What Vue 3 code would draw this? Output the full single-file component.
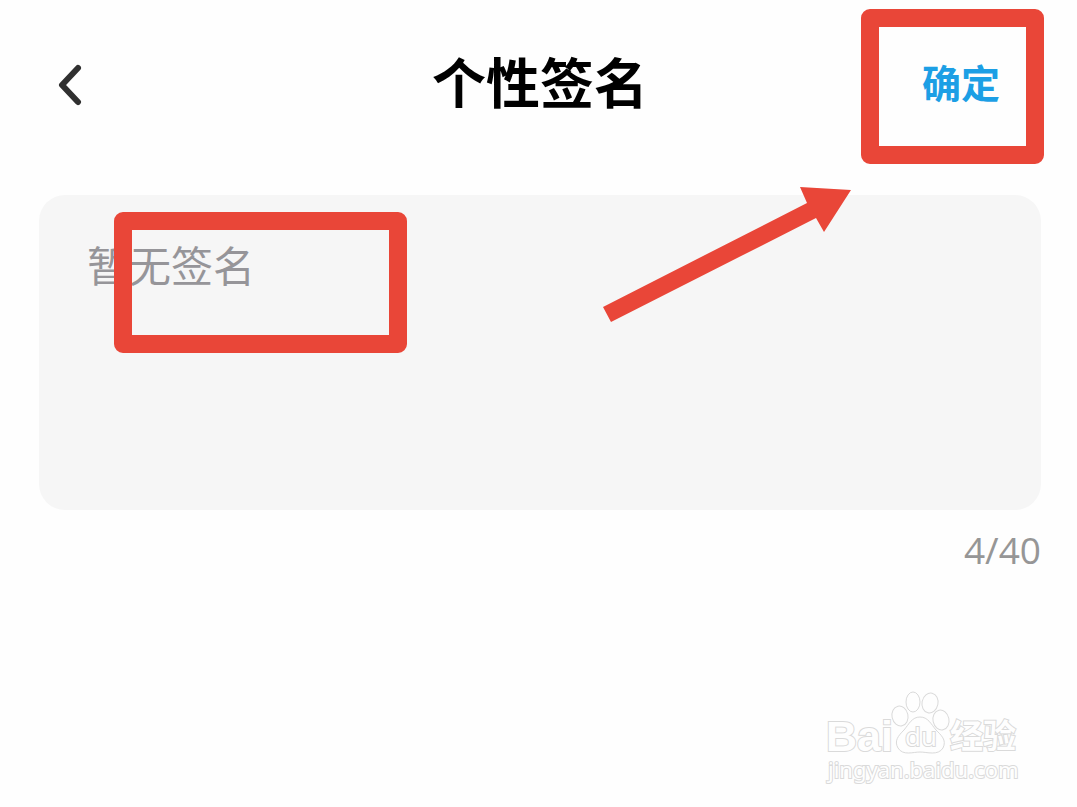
<script setup>
import { computed, ref } from 'vue'

const limit = 40
const signature = ref('暂无签名')
const count = computed(() => signature.value.length)
</script>

<template>
  <main class="page">
    <header class="bar">
      <button class="back" type="button" aria-label="返回">
        <svg width="24" height="42" viewBox="0 0 24 42" aria-hidden="true">
          <path d="M20 4 L4 21 L20 38" />
        </svg>
      </button>
      <h1 class="title">个性签名</h1>
      <div class="action">
        <button class="confirm" type="button">确定</button>
        <span class="frame frame-confirm"></span>
      </div>
    </header>

    <section class="editor">
      <div class="card">
        <textarea v-model="signature" class="field" :maxlength="limit" aria-label="个性签名"></textarea>
        <span class="frame frame-text"></span>
        <svg class="arrow" width="250" height="138" viewBox="0 0 250 138" aria-hidden="true">
          <path d="M1 122 L205 18 L198 2 L249 5 L222 47 L214 33 L9 137 Z" />
        </svg>
      </div>
      <output class="count">{{ count }}/{{ limit }}</output>
    </section>

    <footer class="foot">
      <svg class="mark" width="200" height="96" viewBox="0 0 200 96" role="img" aria-label="Baidu 经验">
        <text class="latin" x="1" y="60" font-size="43">Bai</text>
        <ellipse cx="75" cy="25" rx="8" ry="10" transform="rotate(-12 75 25)" />
        <ellipse cx="88" cy="11" rx="7" ry="10" />
        <ellipse cx="105" cy="12" rx="8" ry="10" transform="rotate(12 105 12)" />
        <ellipse cx="116" cy="29" rx="8" ry="10" transform="rotate(-12 116 29)" />
        <path d="M95 26 C87 26 84 33 79 39 C73 45 69 50 73 57 C78 65 88 61 95 61 C102 61 113 65 118 57 C122 49 116 44 111 39 C106 33 103 26 95 26 Z" />
        <text class="du" x="80" y="55" font-size="26">du</text>
        <text class="han" x="125" y="57" font-size="33">经验</text>
        <text class="url" x="3" y="87" font-size="22">jingyan.baidu.com</text>
      </svg>
    </footer>
  </main>
</template>

<style>
body {
  margin: 0;
  background: #fefefe;
}
</style>

<style scoped>
.page {
  box-sizing: border-box;
  display: flex;
  flex-direction: column;
  min-height: 100vh;
  padding: 29px 36px 20px 39px;
  font-family: "Noto Sans", "Noto Sans CJK SC", sans-serif;
}

.bar {
  display: grid;
  grid-template-columns: 1fr auto 1fr;
  align-items: center;
  height: 104px;
  margin-bottom: 62px;
}

button {
  padding: 0;
  border: 0;
  background: none;
  cursor: pointer;
}

.back {
  justify-self: start;
  margin-left: 19px;
  padding-top: 8px;
}

.back svg {
  display: block;
  fill: none;
  stroke: #303030;
  stroke-width: 6;
  stroke-linecap: round;
  stroke-linejoin: round;
}

.title {
  margin: 0;
  color: #000;
  font-family: "Noto Sans CJK SC", sans-serif;
  font-size: 54px;
  font-weight: 700;
  line-height: 80px;
}

.action {
  position: relative;
  justify-self: end;
  margin-right: 41px;
}

.confirm {
  display: block;
  color: #1c9fe5;
  font-family: "Noto Sans CJK SC", sans-serif;
  font-size: 39px;
  font-weight: 700;
  line-height: 58px;
}

.frame {
  position: absolute;
  box-sizing: border-box;
  border: 18px solid #e94638;
  border-radius: 9px;
  pointer-events: none;
}

.frame-confirm {
  top: -43px;
  right: -44px;
  width: 183px;
  height: 155px;
}

.editor {
  display: flex;
  flex-direction: column;
}

.card {
  position: relative;
  height: 315px;
  border-radius: 26px;
  background: #f6f6f6;
}

.field {
  display: block;
  box-sizing: border-box;
  width: 100%;
  height: 100%;
  padding: 38px 48px;
  border: 0;
  outline: 0;
  resize: none;
  background: transparent;
  color: #969599;
  font-family: "Noto Sans CJK SC", sans-serif;
  font-size: 42px;
  line-height: 62px;
}

.frame-text {
  top: 17px;
  left: 75px;
  width: 293px;
  height: 141px;
}

.arrow {
  position: absolute;
  top: -10px;
  right: 189px;
  fill: #e94638;
  pointer-events: none;
}

.count {
  align-self: flex-end;
  margin-top: 15px;
  color: #969696;
  font-family: "Open Sans", sans-serif;
  font-size: 37px;
  line-height: 50px;
}

.foot {
  display: flex;
  justify-content: flex-end;
  margin-top: auto;
  padding-right: 16px;
}

.mark {
  display: block;
  overflow: visible;
  fill: #fefefe;
  stroke: #dadada;
  stroke-width: 1;
}

.mark text {
  paint-order: stroke;
  stroke-width: 2;
}

.latin {
  font-family: "Liberation Sans", sans-serif;
  font-weight: 700;
}

.du {
  font-family: "Open Sans", sans-serif;
}

.han {
  font-family: "Noto Sans CJK SC", sans-serif;
  font-weight: 700;
}

.url {
  font-family: "Noto Sans", sans-serif;
}
</style>
